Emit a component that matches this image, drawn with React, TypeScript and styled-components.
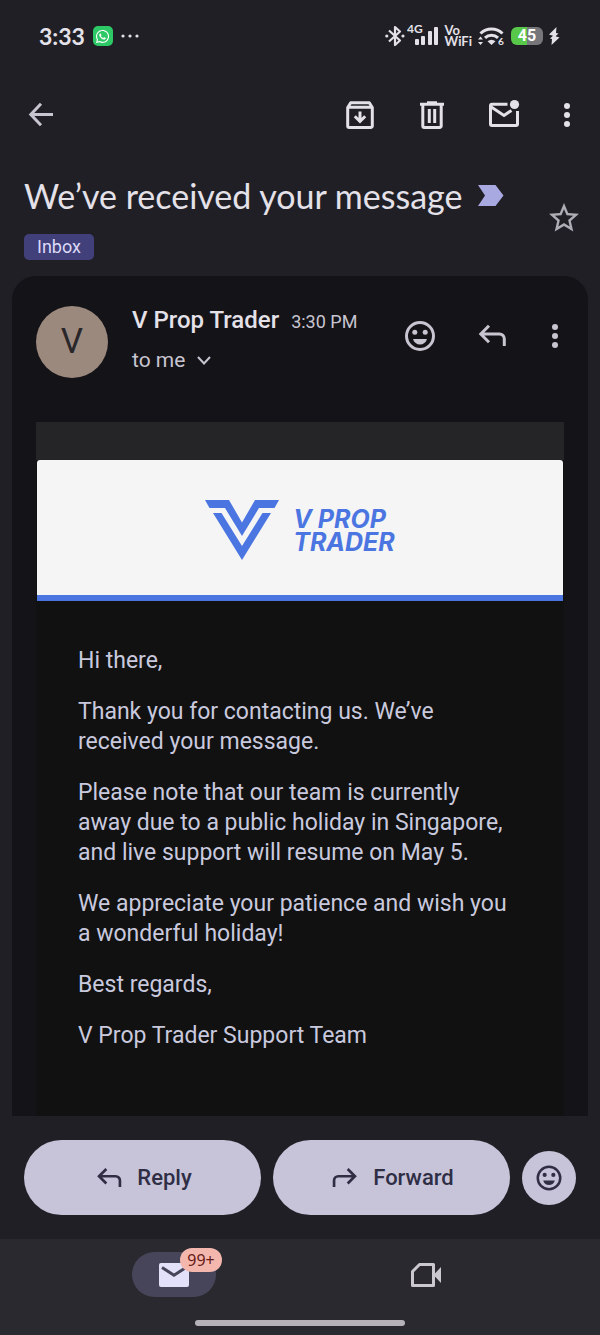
import React from "react";
import styled, { createGlobalStyle } from "styled-components";
import { FaWhatsapp } from "react-icons/fa";
import { MdStarBorder } from "react-icons/md";

const sans = `Lato, "Open Sans", sans-serif`;
const ui = `Roboto, "Open Sans", sans-serif`;

const GlobalStyle = createGlobalStyle`
  *, *::before, *::after { box-sizing: border-box; }
  body { margin: 0; background: #201f25; }
  h1, h2, p { margin: 0; font-weight: 400; }
  button { font: inherit; color: inherit; }
  svg { display: block; flex: none; }
`;

const Screen = styled.div`
  display: flex;
  flex-direction: column;
  min-height: 100vh;
  background: #201f25;
  color: #e4e1e9;
  font-family: ${ui};
`;

const StatusBar = styled.div`
  display: flex;
  align-items: center;
  justify-content: space-between;
  height: 72px;
  padding: 0 40px 0 39px;
`;

const StatusGroup = styled.div<{ $gap: number }>`
  display: flex;
  align-items: center;
  gap: ${(p) => p.$gap}px;
`;

const Clock = styled.span`
  font: 700 23px/28px ${sans};
`;

const WhatsAppBadge = styled.span`
  display: grid;
  place-items: center;
  width: 20px;
  height: 20px;
  border-radius: 5px;
  background: #2dc966;
  color: #fff;
`;

const NetworkLabel = styled.span`
  font: 700 13px/11px ${sans};
`;

const Battery = styled.span`
  display: grid;
  place-items: center;
  width: 32px;
  height: 18px;
  border-radius: 6px;
  background: linear-gradient(to right, #58c84a 0 50%, #77767b 50%);
  color: #fff;
  font: 700 16px/18px ${ui};
`;

const Toolbar = styled.header`
  display: flex;
  align-items: center;
  justify-content: space-between;
  height: 86px;
  padding: 0 24px;
`;

const Actions = styled.div`
  display: flex;
  align-items: center;
  gap: 36px;
`;

const IconButton = styled.button<{ $narrow?: boolean; $tone?: string }>`
  display: flex;
  align-items: center;
  justify-content: center;
  flex: none;
  width: ${(p) => (p.$narrow ? 18 : 36)}px;
  height: 36px;
  padding: 0;
  border: 0;
  background: none;
  color: ${(p) => p.$tone ?? "#e4e1e9"};
  cursor: pointer;
`;

const SubjectRow = styled.section`
  display: flex;
  align-items: center;
  justify-content: space-between;
  height: 118px;
  padding: 18px 18px 16px 24px;
`;

const SubjectBlock = styled.div`
  display: flex;
  flex-direction: column;
  align-items: flex-start;
  gap: 17px;
  padding-bottom: 2px;
`;

const Subject = styled.h1`
  display: flex;
  align-items: center;
  gap: 16px;
  font: 400 34px/42px ${sans};
`;

const LabelChip = styled.button`
  height: 26px;
  padding: 0 13px;
  border: 0;
  border-radius: 5px;
  background: #41407a;
  color: #dcd9f8;
  font: 400 18px/26px ${ui};
`;

const MailCard = styled.article`
  flex: 1;
  margin: 0 12px;
  padding: 30px 24px 0;
  border-radius: 24px 24px 0 0;
  background: #141318;
  display: flex;
  flex-direction: column;
`;

const SenderRow = styled.header`
  display: flex;
  align-items: flex-start;
  height: 116px;
`;

const SenderActions = styled(Actions)`
  padding-top: 12px;
`;

const Avatar = styled.div`
  display: grid;
  place-items: center;
  width: 72px;
  height: 72px;
  border-radius: 50%;
  background: #9c897e;
  color: #29262a;
  font: 400 35px/72px ${ui};
`;

const Sender = styled.div`
  flex: 1;
  margin-left: 24px;
`;

const SenderLine = styled.div`
  display: flex;
  align-items: baseline;
  gap: 12px;
  line-height: 28px;
`;

const SenderName = styled.h2`
  font: 500 24px/28px ${ui};
`;

const SentTime = styled.time`
  color: #c8c5d0;
  font-size: 18px;
`;

const Recipient = styled.button`
  display: flex;
  align-items: center;
  gap: 12px;
  margin-top: 9px;
  padding: 0;
  border: 0;
  background: none;
  color: #c8c5d0;
  font: 400 21px/30px ${ui};
`;

const MailBody = styled.div`
  flex: 1;
  padding-top: 38px;
  background: linear-gradient(#252527 0 38px, #111112 38px);
`;

const Banner = styled.div`
  display: flex;
  align-items: center;
  justify-content: center;
  gap: 14px;
  height: 141px;
  margin: 0 1px;
  padding-top: 4px;
  border-bottom: 6px solid #4b76e2;
  border-radius: 3px 3px 0 0;
  background: #f5f5f5;
  color: #4b76e2;
`;

const BrandName = styled.span`
  padding-top: 3px;
  font: italic 700 25px/23px Inter, ${sans};
`;

const Message = styled.div`
  display: flex;
  flex-direction: column;
  gap: 21px;
  padding: 45px 46px 65px 42px;
  color: #c9c9de;
  font: 400 23px/30px ${ui};
`;

const ReplyBar = styled.footer`
  display: flex;
  align-items: center;
  gap: 12px;
  padding: 24px;
`;

const ReplyButton = styled.button`
  display: flex;
  flex: 1;
  align-items: center;
  justify-content: center;
  gap: 12px;
  height: 75px;
  padding: 0;
  border: 0;
  border-radius: 38px;
  background: #c7c4da;
  color: #2f2e45;
  font: 500 22px/30px ${ui};
`;

const ReactButton = styled.button`
  display: grid;
  place-items: center;
  width: 54px;
  height: 54px;
  padding: 0;
  border: 0;
  border-radius: 50%;
  background: #c7c4da;
  color: #2f2e45;
`;

const BottomNav = styled.nav`
  display: flex;
  flex-direction: column;
  align-items: center;
  justify-content: space-between;
  height: 96px;
  padding: 13px 48px 9px;
  background: #2a292f;
`;

const Tabs = styled.div`
  display: flex;
  width: 100%;
`;

const TabLink = styled.a`
  display: flex;
  flex: 1;
  justify-content: center;
  color: #cbc8d0;
`;

const TabPill = styled.span<{ $active?: boolean }>`
  position: relative;
  display: grid;
  place-items: center;
  width: 84px;
  height: 45px;
  border-radius: 23px;
  background: ${(p) => (p.$active ? "#474559" : "transparent")};
`;

const CountBadge = styled.span`
  position: absolute;
  top: -4px;
  right: -6px;
  width: 42px;
  height: 24px;
  border-radius: 12px;
  background: #f4b7ae;
  color: #641a16;
  font: 400 16px/24px "Noto Sans", sans-serif;
  text-align: center;
`;

const HomeIndicator = styled.div`
  width: 210px;
  height: 6px;
  border-radius: 3px;
  background: #b5b3b8;
`;

type IconProps = { size?: number };

const Stroke = ({ size = 36, children }: IconProps & { children: React.ReactNode }) => (
  <svg width={size} height={size} viewBox="0 0 36 36" fill="none" stroke="currentColor" strokeWidth="3" aria-hidden="true">
    {children}
  </svg>
);

const BackIcon = () => (
  <Stroke>
    <path d="M29 17.5H7M17 6.8 6.8 17.5 17 28.2" />
  </Stroke>
);

const ArchiveIcon = () => (
  <Stroke>
    <path strokeLinejoin="round" d="M5.7 10.5 8.7 5.8H27.3L30.3 10.5V29a1.5 1.5 0 0 1-1.5 1.5H7.2A1.5 1.5 0 0 1 5.7 29ZM5.7 10.2H30.3" />
    <path d="M18 14.5V24M12.8 19.3 18 24.5 23.2 19.3" />
  </Stroke>
);

const TrashIcon = () => (
  <Stroke>
    <path d="M6 7.3H30M13 5.8H23M8.8 7.3V29a1.5 1.5 0 0 0 1.5 1.5H25.7A1.5 1.5 0 0 0 27.2 29V7.3M15.3 12V26M20.7 12V26" />
  </Stroke>
);

const UnreadIcon = () => (
  <Stroke>
    <path d="M21.5 7.2H6A1.5 1.5 0 0 0 4.5 8.7V27A1.5 1.5 0 0 0 6 28.5H30A1.5 1.5 0 0 0 31.5 27V14M4.5 9.5 18 18.5 25.5 13.4" />
    <circle cx="28.5" cy="7.5" r="4.6" fill="currentColor" stroke="none" />
  </Stroke>
);

const MoreIcon = () => (
  <svg width="18" height="36" viewBox="0 0 18 36" fill="currentColor" aria-hidden="true">
    <circle cx="9" cy="9" r="3" />
    <circle cx="9" cy="18" r="3" />
    <circle cx="9" cy="27" r="3" />
  </svg>
);

const SmileIcon = ({ size }: IconProps) => (
  <Stroke size={size}>
    <circle cx="18" cy="18" r="13.5" />
    <g fill="currentColor" stroke="none">
      <circle cx="12.8" cy="14.3" r="2.5" />
      <circle cx="23.2" cy="14.3" r="2.5" />
      <path d="M11 21H25C24 24.6 21.3 26.5 18 26.5S12 24.6 11 21Z" />
    </g>
  </Stroke>
);

const ReplyIcon = ({ size }: IconProps) => (
  <Stroke size={size}>
    <path d="M15 7.8 6.8 16 15 24.2M7 16H25.5A4.8 4.8 0 0 1 30.3 20.8V28" />
  </Stroke>
);

const ForwardIcon = ({ size }: IconProps) => (
  <Stroke size={size}>
    <path d="M21 7.8 29.2 16 21 24.2M29 16H10.5A4.8 4.8 0 0 0 5.7 20.8V28" />
  </Stroke>
);

const ChevronIcon = () => (
  <svg width="14" height="14" viewBox="0 0 14 14" fill="none" stroke="currentColor" strokeWidth="2" aria-hidden="true">
    <path d="M1 4 7 10.5 13 4" />
  </svg>
);

const ImportantIcon = () => (
  <svg width="26" height="21" viewBox="0 0 26 21" fill="#a9a9e2" role="img" aria-label="Important">
    <path d="M0 0H17.5L25.5 10.5 17.5 21H0L7 10.5Z" />
  </svg>
);

const DotsIcon = () => (
  <svg width="18" height="20" viewBox="0 0 18 20" fill="currentColor" aria-hidden="true">
    <circle cx="2" cy="10" r="1.6" />
    <circle cx="9" cy="10" r="1.6" />
    <circle cx="16" cy="10" r="1.6" />
  </svg>
);

const BluetoothIcon = () => (
  <svg width="20" height="22" viewBox="0 0 20 22" fill="none" stroke="currentColor" strokeWidth="2.2" aria-hidden="true">
    <path strokeLinejoin="round" d="M4 5.5 15 15.5 10 20V2L15 6.5 4 16.5" />
    <circle cx="1.8" cy="11" r="1.6" fill="currentColor" stroke="none" />
    <circle cx="18" cy="11" r="1.6" fill="currentColor" stroke="none" />
  </svg>
);

const SignalIcon = () => (
  <svg width="32" height="30" viewBox="0 0 32 30" fill="currentColor" role="img" aria-label="4G signal">
    <text x="0" y="12" fontFamily="Lato, sans-serif" fontWeight="700" fontSize="12">4G</text>
    <rect x="8" y="18" width="4" height="6" rx="1" />
    <rect x="14" y="15" width="4" height="9" rx="1" />
    <rect x="21" y="10" width="4" height="14" rx="1" />
    <rect x="27" y="6" width="4" height="18" rx="1" />
  </svg>
);

const WifiIcon = () => (
  <svg width="27" height="22" viewBox="0 0 27 22" fill="none" stroke="currentColor" strokeWidth="3" aria-hidden="true">
    <path d="M2.5 8.5A15.5 15.5 0 0 1 24.5 8.5" />
    <path d="M7 12.8A9.5 9.5 0 0 1 20 12.8" />
    <g fill="currentColor" stroke="none">
      <path d="M9.5 16.2A6.5 6.5 0 0 1 17.5 16.2L13.5 20Z" />
      <path d="M0 14.5 2.5 11.5 5 14.5ZM0 17 2.5 20 5 17Z" />
      <text x="20" y="20" fontFamily="Lato, sans-serif" fontWeight="700" fontSize="10">6</text>
    </g>
  </svg>
);

const BoltIcon = () => (
  <svg width="11" height="18" viewBox="0 0 11 18" fill="currentColor" aria-hidden="true">
    <path d="M7.5 0 0 7.5 4 8.8 1 11.5 3 12 2.5 18 10.5 10.5 6.5 9.2 9.5 6.5 7 6Z" />
  </svg>
);

const BrandMark = () => (
  <svg width="74" height="60" viewBox="0 0 74 60" fill="currentColor" aria-hidden="true">
    <path d="M0 0H24L37 22.5 50 0H74L69.5 8H54L37 36 20 8H4.5Z" />
    <path d="M8 13H16.5L37 46 57.5 13H66L37 60Z" />
  </svg>
);

const MailTabIcon = () => (
  <svg width="30" height="24" viewBox="0 0 30 24" aria-hidden="true">
    <rect width="30" height="24" rx="2" fill="#e3e0f9" />
    <path d="M3 4.5 15 12.2 27 4.5" fill="none" stroke="#474559" strokeWidth="3" />
  </svg>
);

const MeetTabIcon = () => (
  <svg width="30" height="24" viewBox="0 0 30 24" fill="none" stroke="currentColor" strokeWidth="3" aria-hidden="true">
    <path strokeLinejoin="round" d="M8.5 1.5H22.5V22.5H1.5V8.5Z" />
    <path d="M22.5 12 30 4V20Z" fill="currentColor" stroke="none" />
  </svg>
);

const paragraphs = [
  "Hi there,",
  "Thank you for contacting us. We’ve received your message.",
  "Please note that our team is currently away due to a public holiday in Singapore, and live support will resume on May 5.",
  "We appreciate your patience and wish you a wonderful holiday!",
  "Best regards,",
  "V Prop Trader Support Team",
];

export default function App() {
  return (
    <Screen>
      <GlobalStyle />
      <StatusBar>
        <StatusGroup $gap={8}>
          <Clock>3:33</Clock>
          <WhatsAppBadge>
            <FaWhatsapp size={15} />
          </WhatsAppBadge>
          <DotsIcon />
        </StatusGroup>
        <StatusGroup $gap={6}>
          <StatusGroup $gap={2}>
            <BluetoothIcon />
            <SignalIcon />
          </StatusGroup>
          <NetworkLabel>
            Vo
            <br />
            WiFi
          </NetworkLabel>
          <WifiIcon />
          <Battery>45</Battery>
          <BoltIcon />
        </StatusGroup>
      </StatusBar>

      <Toolbar>
        <IconButton aria-label="Back" $tone="#c8c5d0">
          <BackIcon />
        </IconButton>
        <Actions>
          <IconButton aria-label="Archive">
            <ArchiveIcon />
          </IconButton>
          <IconButton aria-label="Delete">
            <TrashIcon />
          </IconButton>
          <IconButton aria-label="Mark as unread">
            <UnreadIcon />
          </IconButton>
          <IconButton aria-label="More options" $narrow>
            <MoreIcon />
          </IconButton>
        </Actions>
      </Toolbar>

      <SubjectRow>
        <SubjectBlock>
          <Subject>
            We’ve received your message
            <ImportantIcon />
          </Subject>
          <LabelChip>Inbox</LabelChip>
        </SubjectBlock>
        <IconButton aria-label="Star" $tone="#aeacb4">
          <MdStarBorder size={36} />
        </IconButton>
      </SubjectRow>

      <MailCard>
        <SenderRow>
          <Avatar>V</Avatar>
          <Sender>
            <SenderLine>
              <SenderName>V Prop Trader</SenderName>
              <SentTime>3:30 PM</SentTime>
            </SenderLine>
            <Recipient>
              to me
              <ChevronIcon />
            </Recipient>
          </Sender>
          <SenderActions>
            <IconButton aria-label="Add reaction" $tone="#c8c5d0">
              <SmileIcon />
            </IconButton>
            <IconButton aria-label="Reply" $tone="#c8c5d0">
              <ReplyIcon />
            </IconButton>
            <IconButton aria-label="More message options" $narrow $tone="#c8c5d0">
              <MoreIcon />
            </IconButton>
          </SenderActions>
        </SenderRow>

        <MailBody>
          <Banner>
            <BrandMark />
            <BrandName>
              V PROP
              <br />
              TRADER
            </BrandName>
          </Banner>
          <Message>
            {paragraphs.map((text) => (
              <p key={text}>{text}</p>
            ))}
          </Message>
        </MailBody>
      </MailCard>

      <ReplyBar>
        <ReplyButton>
          <ReplyIcon size={32} />
          Reply
        </ReplyButton>
        <ReplyButton>
          <ForwardIcon size={32} />
          Forward
        </ReplyButton>
        <ReactButton aria-label="React with emoji">
          <SmileIcon size={30} />
        </ReactButton>
      </ReplyBar>

      <BottomNav>
        <Tabs>
          <TabLink href="#mail" aria-label="Mail">
            <TabPill $active>
              <MailTabIcon />
              <CountBadge>99+</CountBadge>
            </TabPill>
          </TabLink>
          <TabLink href="#meet" aria-label="Meet">
            <TabPill>
              <MeetTabIcon />
            </TabPill>
          </TabLink>
        </Tabs>
        <HomeIndicator />
      </BottomNav>
    </Screen>
  );
}
